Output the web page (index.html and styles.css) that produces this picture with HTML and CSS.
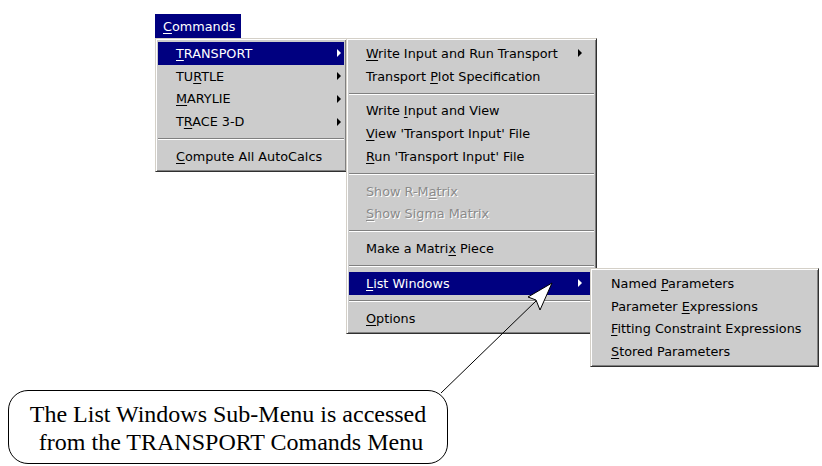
FILE: index.html
```html
<!DOCTYPE html>
<html lang="en">
<head>
    <meta charset="UTF-8">
    <title>TRANSPORT Commands Menu</title>
    <link rel="stylesheet" href="styles.css">
</head>
<body>

    <div class="screen">
        <div class="menu-title"><u>C</u>ommands</div>

        <!-- Commands menu -->
        <div class="menu menu-commands">
            <div class="item active"><span class="label"><u>T</u>RANSPORT</span><span class="arrow"></span></div>
            <div class="item"><span class="label">TU<u>R</u>TLE</span><span class="arrow"></span></div>
            <div class="item"><span class="label"><u>M</u>ARYLIE</span><span class="arrow"></span></div>
            <div class="item"><span class="label">T<u>R</u>ACE 3-D</span><span class="arrow"></span></div>
            <div class="separator"></div>
            <div class="item"><span class="label"><u>C</u>ompute All AutoCalcs</span></div>
        </div>

        <!-- TRANSPORT sub-menu -->
        <div class="menu menu-transport">
            <div class="item"><span class="label"><u>W</u>rite Input and Run Transport</span><span class="arrow"></span></div>
            <div class="item"><span class="label">Transport <u>P</u>lot Specification</span></div>
            <div class="separator"></div>
            <div class="item"><span class="label">Write <u>I</u>nput and View</span></div>
            <div class="item"><span class="label"><u>V</u>iew 'Transport Input' File</span></div>
            <div class="item"><span class="label"><u>R</u>un 'Transport Input' File</span></div>
            <div class="separator"></div>
            <div class="item disabled"><span class="label">Show R-M<u>a</u>trix</span></div>
            <div class="item disabled"><span class="label"><u>S</u>how Sigma Matrix</span></div>
            <div class="separator"></div>
            <div class="item"><span class="label">Make a Matri<u>x</u> Piece</span></div>
            <div class="separator"></div>
            <div class="item active"><span class="label"><u>L</u>ist Windows</span><span class="arrow"></span></div>
            <div class="separator"></div>
            <div class="item"><span class="label"><u>O</u>ptions</span></div>
        </div>

        <!-- List Windows sub-menu -->
        <div class="menu menu-list">
            <div class="item"><span class="label">Named <u>P</u>arameters</span></div>
            <div class="item"><span class="label">Parameter <u>E</u>xpressions</span></div>
            <div class="item"><span class="label"><u>F</u>itting Constraint Expressions</span></div>
            <div class="item"><span class="label"><u>S</u>tored Parameters</span></div>
        </div>

        <div class="callout">
            The List Windows Sub-Menu is accessed<br>
            &nbsp;from the TRANSPORT Comands Menu
        </div>

        <svg class="pointer" width="822" height="466" viewBox="0 0 822 466">
            <line x1="441" y1="393" x2="537" y2="300" stroke="#000" stroke-width="1"/>
            <polygon points="552,283 528,297 536,300 540,310" fill="#fff" stroke="#000" stroke-width="1" stroke-linejoin="miter"/>
        </svg>
    </div>

</body>
</html>
```

FILE: styles.css
```css
body {
    margin: 0;
    padding: 0;
    background-color: #ffffff;
    font-family: 'DejaVu Sans', Tahoma, Verdana, sans-serif;
    font-size: 12.8px;
    color: #000;
}

.screen {
    position: relative;
    width: 822px;
    height: 466px;
    overflow: hidden;
}

u {
    text-underline-offset: 2px;
}

.menu-title {
    position: absolute;
    left: 155px;
    top: 14px;
    width: 86px;
    height: 24px;
    box-sizing: border-box;
    padding-left: 8px;
    display: flex;
    align-items: center;
    background-color: #000080;
    color: #fff;
}

/* Windows classic raised menu frame */
.menu {
    position: absolute;
    box-sizing: border-box;
    background-color: #cccccc;
    border: 1px solid;
    border-color: #d4d0c8 #303030 #303030 #d4d0c8;
    box-shadow: inset 1px 1px 0 #ffffff, inset -1px -1px 0 #808080;
    padding: 3px 2px;
    display: flex;
    flex-direction: column;
}

.menu-commands {
    left: 155px;
    top: 38px;
    width: 192px;
    z-index: 1;
}

.menu-transport {
    left: 346px;
    top: 38px;
    width: 251px;
    z-index: 2;
}

.menu-list {
    left: 590px;
    top: 268px;
    width: 229px;
    z-index: 3;
}

.item {
    height: 22.75px;
    display: flex;
    align-items: center;
    justify-content: space-between;
    padding-left: 18px;
    padding-right: 12px;
    white-space: nowrap;
}

.menu-commands .item {
    padding-right: 3px;
}

.menu-transport .item {
    padding-left: 17px;
}

.item.active {
    background-color: #000080;
    color: #fff;
}

.item.disabled {
    color: #8a8a8a;
    text-shadow: 1px 1px 0 #ffffff;
}

.arrow {
    width: 0;
    height: 0;
    border-left: 4px solid currentColor;
    border-top: 4px solid transparent;
    border-bottom: 4px solid transparent;
}

.separator {
    height: 0;
    margin: 5px 0;
    border-top: 1px solid #808080;
    border-bottom: 1px solid #ffffff;
}

.callout {
    position: absolute;
    left: 8px;
    top: 390px;
    width: 440px;
    height: 74px;
    box-sizing: border-box;
    border: 1px solid #000;
    border-radius: 20px;
    padding-top: 9px;
    text-align: center;
    font-family: 'Liberation Serif', 'Times New Roman', serif;
    font-size: 24px;
    line-height: 28px;
    background-color: #fff;
}

.pointer {
    position: absolute;
    left: 0;
    top: 0;
    z-index: 5;
    pointer-events: none;
}
```
